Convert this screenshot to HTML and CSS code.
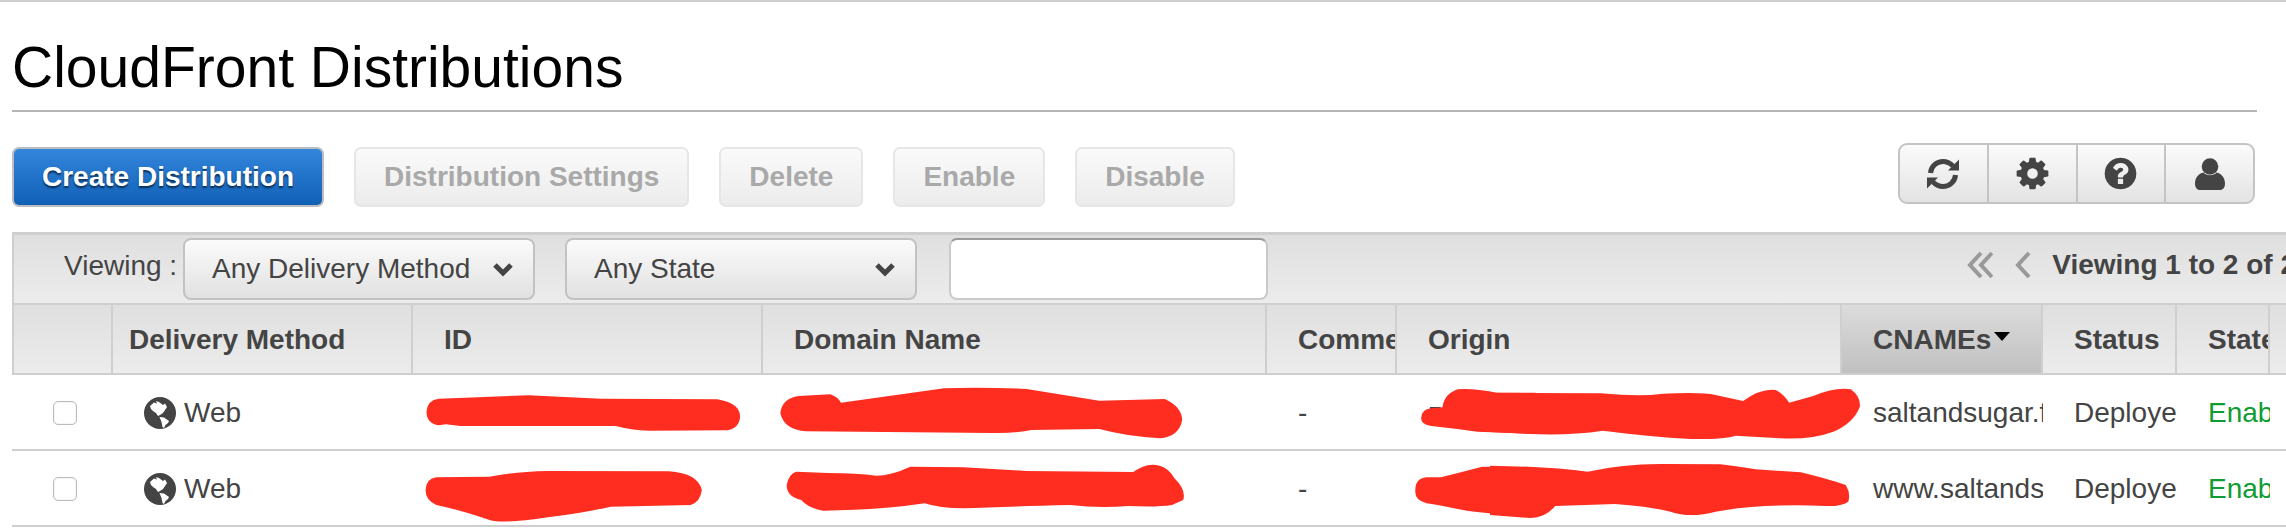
FILE: index.html
```html
<!DOCTYPE html>
<html lang="en">
<head>
<meta charset="utf-8">
<title>CloudFront Distributions</title>
<link rel="stylesheet" href="styles.css">
</head>
<body>
<div class="page">
  <h1 class="title">CloudFront Distributions</h1>
  <div class="actions">
    <div class="action-buttons">
      <button class="btn btn-primary">Create Distribution</button>
      <button class="btn">Distribution Settings</button>
      <button class="btn">Delete</button>
      <button class="btn">Enable</button>
      <button class="btn">Disable</button>
    </div>
    <div class="tools">
      <div class="tool"><svg class="tool-glyph" viewBox="0 0 32 32"><path class="arc" d="M3.500 15C4 8 10 3.500 16 3.500C20 3.500 23 5 26 8"/><path d="M32 1.500V12.500H21Z"/><path class="arc" d="M28.500 17C28 24 22 28.500 16 28.500C12 28.500 9 27 6 24"/><path d="M0 30.500V19.500H11Z"/></svg></div>
      <div class="tool"><svg class="tool-icon" viewBox="0 0 1792 1792"><path d="M1152 896q0-106-75-181t-181-75-181 75-75 181 75 181 181 75 181-75 75-181zm512-109v222q0 12-8 23t-20 13l-185 28q-19 54-39 91 35 50 107 138 10 12 10 25t-9 23q-27 37-99 108t-94 71q-12 0-26-9l-138-108q-44 23-91 38-16 136-29 186-7 28-36 28h-222q-14 0-24.5-8.5t-11.5-21.5l-28-184q-49-16-90-37l-141 107q-10 9-25 9-14 0-25-11-126-114-165-168-7-10-7-23 0-12 8-23 15-21 51-66.5t54-70.5q-27-50-41-99l-183-27q-13-2-21-12.5t-8-23.5v-222q0-12 8-23t19-13l186-28q14-46 39-92-40-57-107-138-10-12-10-24 0-10 9-23 26-36 98.5-107.5t94.5-71.5q13 0 26 10l138 107q44-23 91-38 16-136 29-186 7-28 36-28h222q14 0 24.5 8.5t11.5 21.5l28 184q49 16 90 37l142-107q9-9 24-9 13 0 25 10 129 119 165 170 7 8 7 22 0 12-8 23-15 21-51 66.5t-54 70.5q26 50 41 98l183 28q13 2 21 12.5t8 23.5z"/></svg></div>
      <div class="tool"><svg class="tool-icon" viewBox="0 0 1792 1792"><path d="M1024 1376v-192q0-14-9-23t-23-9h-192q-14 0-23 9t-9 23v192q0 14 9 23t23 9h192q14 0 23-9t9-23zm256-672q0-88-55.5-163t-138.5-116-170-41q-243 0-371 213-15 24 8 42l132 100q7 6 19 6 16 0 25-12 53-68 86-92 34-24 86-24 48 0 85.5 26t37.5 59q0 38-20 61t-68 45q-63 28-115.5 86.5t-52.5 125.5v36q0 14 9 23t23 9h192q14 0 23-9t9-23q0-19 21.5-49.5t54.5-49.5q32-18 49-28.5t46-35 44.5-48 28-60.5 12.5-81zm384 192q0 209-103 385.5t-279.5 279.5-385.5 103-385.5-103-279.5-279.5-103-385.5 103-385.5 279.5-279.5 385.5-103 385.5 103 279.5 279.5 103 385.5z"/></svg></div>
      <div class="tool"><svg class="tool-glyph" viewBox="0 0 32 32"><circle cx="16" cy="8.500" r="8.300"/><path d="M9.500 14.500C12 18 20 18 22.500 14.500C27.500 15.500 31 20 31 25.500C31 29.500 29 32 26 32H6C3 32 1 29.500 1 25.500C1 20 4.500 15.500 9.500 14.500Z"/></svg></div>
    </div>
  </div>

  <div class="panel">
    <div class="filters">
      <span class="filter-label">Viewing :</span>
      <div class="select select-method"><span>Any Delivery Method</span><svg class="chevron" viewBox="0 0 22 16"><path d="M3 4l8 8 8-8"/></svg></div>
      <div class="select select-state"><span>Any State</span><svg class="chevron" viewBox="0 0 22 16"><path d="M3 4l8 8 8-8"/></svg></div>
      <div class="search"></div>
      <div class="pager">
        <svg class="pager-first" viewBox="0 0 26 28"><path d="M14 2L3 14l11 12M25 2L14 14l11 12"/></svg>
        <svg class="pager-prev" viewBox="0 0 16 28"><path d="M14 2L3 14l11 12"/></svg>
        <strong class="pager-text">Viewing 1 to 2 of 2</strong>
      </div>
    </div>

    <div class="row head">
      <div class="cell"></div>
      <div class="cell cell-method">Delivery Method</div>
      <div class="cell">ID</div>
      <div class="cell">Domain Name</div>
      <div class="cell">Comment</div>
      <div class="cell">Origin</div>
      <div class="cell cell-sorted">CNAMEs<span class="sort-caret"></span></div>
      <div class="cell">Status</div>
      <div class="cell">State</div>
      <div class="cell"></div>
    </div>

    <div class="row body-row">
      <div class="cell cell-check"><span class="checkbox"></span></div>
      <div class="cell cell-web"><svg class="globe" viewBox="0 0 32 32"><use href="#globe"/></svg>Web</div>
      <div class="cell"></div>
      <div class="cell"></div>
      <div class="cell">-</div>
      <div class="cell"></div>
      <div class="cell">saltandsugar.fr</div>
      <div class="cell">Deployed</div>
      <div class="cell cell-enabled">Enabled</div>
      <div class="cell"></div>
    </div>
    <div class="row body-row">
      <div class="cell cell-check"><span class="checkbox"></span></div>
      <div class="cell cell-web"><svg class="globe" viewBox="0 0 32 32"><use href="#globe"/></svg>Web</div>
      <div class="cell"></div>
      <div class="cell"></div>
      <div class="cell">-</div>
      <div class="cell"></div>
      <div class="cell">www.saltandsugar.fr</div>
      <div class="cell">Deployed</div>
      <div class="cell cell-enabled">Enabled</div>
      <div class="cell"></div>
    </div>
  </div>
</div>

<svg class="defs" width="0" height="0">
  <symbol id="globe" viewBox="0 0 32 32">
    <circle cx="16" cy="16" r="16" fill="#444"/>
    <path fill="#fff" d="M6 9L10 5.500L13 6.500L12 4L15 5L19 8L21 6.500L23 10L21 13L19 16L16 18L14 19L12 16L9 14L7 12Z"/>
    <path fill="#fff" d="M15.500 20L20 20.500L25 24L24 26L21.500 28L20 31L18.500 30L17.500 25Z"/>
  </symbol>
</svg>

<svg class="redactions" viewBox="0 0 2286 530" aria-hidden="true">
  <g class="ink" transform="translate(0,290) scale(.4847,.3333)">
    <path d="M880,365 Q882,330 905,326 L1090,316 L1240,326 L1480,328 Q1527,340 1527,380 Q1525,415 1500,421 L1340,422 Q1300,420 1270,408 L950,408 L920,403 L905,406 Q880,400 880,365Z"/>
    <path d="M878,600 Q880,565 900,562 L1010,560 Q1060,545 1130,543 L1380,544 Q1440,550 1448,600 Q1445,635 1425,645 L1260,650 Q1200,670 1130,682 Q1040,702 1010,690 Q950,660 900,645 Q878,630 878,600Z"/>
  </g>
  <g transform="translate(760,290) scale(.4847,.3333)">
    <rect class="peek" x="1382" y="351" width="22" height="6"/>
  </g>
  <g class="ink" transform="translate(760,290) scale(.4847,.3333)">
    <path d="M42,370 Q45,325 80,318 L145,313 Q160,320 167,338 L380,295 Q450,290 550,297 L700,332 L835,327 Q870,350 871,390 Q865,440 825,445 Q760,440 700,417 L560,420 Q530,430 480,429 L95,424 Q50,420 42,370Z"/>
    <path d="M55,585 Q60,550 75,545 L140,549 Q200,550 240,557 Q270,557 310,530 L420,532 L550,543 L770,546 Q790,525 810,524 Q840,525 855,565 Q880,600 873,630 L850,645 Q820,652 760,648 Q700,655 640,645 Q500,650 420,655 Q370,655 340,640 Q250,660 130,662 Q100,655 85,630 Q55,620 55,585Z"/>
    <path d="M1364,385 Q1364,358 1385,355 L1408,352 Q1412,310 1440,298 Q1470,294 1520,308 L1600,308 L1600,432 L1480,425 Q1430,415 1385,408 Q1364,405 1364,385Z"/>
    <path d="M1352,600 Q1352,565 1375,562 L1405,562 Q1450,545 1490,530 L1600,532 L1600,680 Q1500,672 1450,660 Q1400,645 1375,640 Q1350,630 1352,600Z"/>
  </g>
  <g class="ink" transform="translate(1500,290) scale(.5012,.3333)">
    <path d="M-30,308 L200,310 Q280,320 320,312 Q400,305 430,315 L485,333 Q520,295 550,300 Q565,310 577,338 L625,318 Q670,290 700,298 Q720,320 718,350 Q705,400 665,425 Q620,450 560,445 L470,437 Q450,448 380,447 Q300,440 205,422 Q140,437 60,432 L-30,425Z"/>
    <path d="M-20,527 Q100,530 175,545 Q250,520 330,522 L440,523 Q480,530 510,538 L600,547 Q650,565 690,585 Q700,610 695,635 Q680,650 650,648 Q520,640 430,665 Q380,685 340,665 Q300,650 230,642 L110,648 Q90,685 60,684 L-20,675Z"/>
  </g>
</svg>
</body>
</html>
```

FILE: styles.css
```css
* { box-sizing: border-box; }

html, body {
  margin: 0;
  height: 530px;
  overflow: hidden;
  background: #fff;
}

body {
  position: relative;
  border-top: 2px solid #cfcfcf;
  font-family: "Liberation Sans", Arial, sans-serif;
  font-size: 28px;
  color: #444;
}

.page {
  padding-left: 12px;
}

.title {
  width: 2245px;
  margin: 0;
  padding: 38px 0 15px;
  border-bottom: 2px solid #b5b5b5;
  font-size: 57px;
  line-height: 55px;
  font-weight: 400;
  color: #000;
}

.actions {
  display: flex;
  justify-content: space-between;
  align-items: flex-start;
  width: 2243px;
  margin: 31px 0 25px;
}

.action-buttons {
  display: flex;
  gap: 30px;
  padding-top: 4px;
}

.btn {
  height: 60px;
  padding: 0 28px;
  border: 2px solid #e6e6e6;
  border-radius: 7px;
  background: linear-gradient(#fafafa, #ececec);
  font: 700 28px "Liberation Sans", Arial, sans-serif;
  color: #a9a9a9;
}

.btn-primary {
  border-color: #bdbdbd;
  background: linear-gradient(#3286dc, #1060b6);
  color: #fff;
  text-shadow: 0 2px 2px rgba(0, 0, 0, .6);
}

.tools {
  display: flex;
  width: 357px;
  height: 61px;
  border: 2px solid #c4c4c4;
  border-radius: 9px;
  background: linear-gradient(#fbfbfb, #e3e3e3);
}

.tool {
  display: flex;
  flex: 1;
  align-items: center;
  justify-content: center;
  border-left: 2px solid #c4c4c4;
}

.tool:first-child {
  border-left: 0;
}

.tool-icon {
  width: 37px;
  height: 37px;
  fill: #444;
}

.tool-glyph {
  width: 32px;
  height: 32px;
  fill: #444;
}

.arc {
  fill: none;
  stroke: #444;
  stroke-width: 5;
}

.panel {
  width: 2340px;
}

.filters {
  display: flex;
  align-items: center;
  height: 73px;
  padding: 0 56px 0 50px;
  border-top: 3px solid #cfcfcf;
  border-left: 2px solid #cfcfcf;
  border-bottom: 2px solid #cfcfcf;
  background: linear-gradient(#dfdfdf, #ececec);
}

.filter-label {
  width: 119px;
  padding-bottom: 6px;
  white-space: nowrap;
}

.select {
  display: flex;
  align-items: center;
  justify-content: space-between;
  height: 62px;
  padding: 0 19px 0 27px;
  border: 2px solid #c2c2c2;
  border-radius: 8px;
  background: linear-gradient(#fbfbfb, #e1e1e1);
}

.select-method {
  width: 352px;
}

.select-state {
  width: 352px;
  margin-left: 30px;
}

.chevron {
  width: 22px;
  height: 16px;
  fill: none;
  stroke: #444;
  stroke-width: 5;
}

.search {
  width: 319px;
  height: 62px;
  margin-left: 32px;
  border: 2px solid #cacaca;
  border-top-color: #9a9a9a;
  border-radius: 8px;
  background: #fff;
}

.pager {
  display: flex;
  align-items: center;
  margin-left: auto;
  padding-bottom: 8px;
}

.pager-first,
.pager-prev {
  height: 28px;
  fill: none;
  stroke: #999;
  stroke-width: 4;
}

.pager-first {
  width: 26px;
}

.pager-prev {
  width: 16px;
  margin-left: 22px;
}

.pager-text {
  margin-left: 21px;
  white-space: nowrap;
  color: #444;
}

.row {
  display: grid;
  grid-template-columns: 99px 300px 350px 504px 130px 445px 201px 134px 93px 100px;
  padding-left: 2px;
}

.cell {
  display: flex;
  align-items: center;
  min-width: 0;
  padding-top: 2px;
  padding-left: 31px;
  overflow: hidden;
  white-space: nowrap;
}

.head {
  height: 70px;
  padding-left: 0;
  border-left: 2px solid #cfcfcf;
  border-bottom: 2px solid #cfcfcf;
  background: linear-gradient(#dfdfdf, #ececec);
  font-weight: 700;
}

.head .cell {
  border-right: 2px solid #cfcfcf;
}

.head .cell-method {
  padding-left: 16px;
}

.head .cell-sorted {
  background: linear-gradient(#dcdcdc, #c0c0c0);
}

.sort-caret {
  align-self: flex-start;
  width: 0;
  height: 0;
  margin: 25px 0 0 3px;
  border-left: 8px solid transparent;
  border-right: 8px solid transparent;
  border-top: 9px solid #000;
}

.body-row {
  height: 76px;
  border-bottom: 2px solid #cfcfcf;
  background: #fff;
}

.body-row .cell:first-child {
  padding-left: 2px;
}

.cell-check {
  justify-content: center;
}

.checkbox {
  width: 24px;
  height: 24px;
  border: 1px solid #bbb;
  border-radius: 5px;
  background: #fff;
  box-shadow: inset 0 0 2px #ddd;
}

.cell-web {
  padding-left: 31px;
}

.globe {
  flex: none;
  width: 32px;
  height: 32px;
  margin-right: 8px;
}

.cell-enabled {
  color: #0e9c33;
}

.defs {
  position: absolute;
}

.redactions {
  position: absolute;
  top: -2px;
  left: 0;
  width: 2286px;
  height: 530px;
  pointer-events: none;
}

.ink {
  fill: #ff2d20;
}

.peek {
  fill: #444;
}
```
